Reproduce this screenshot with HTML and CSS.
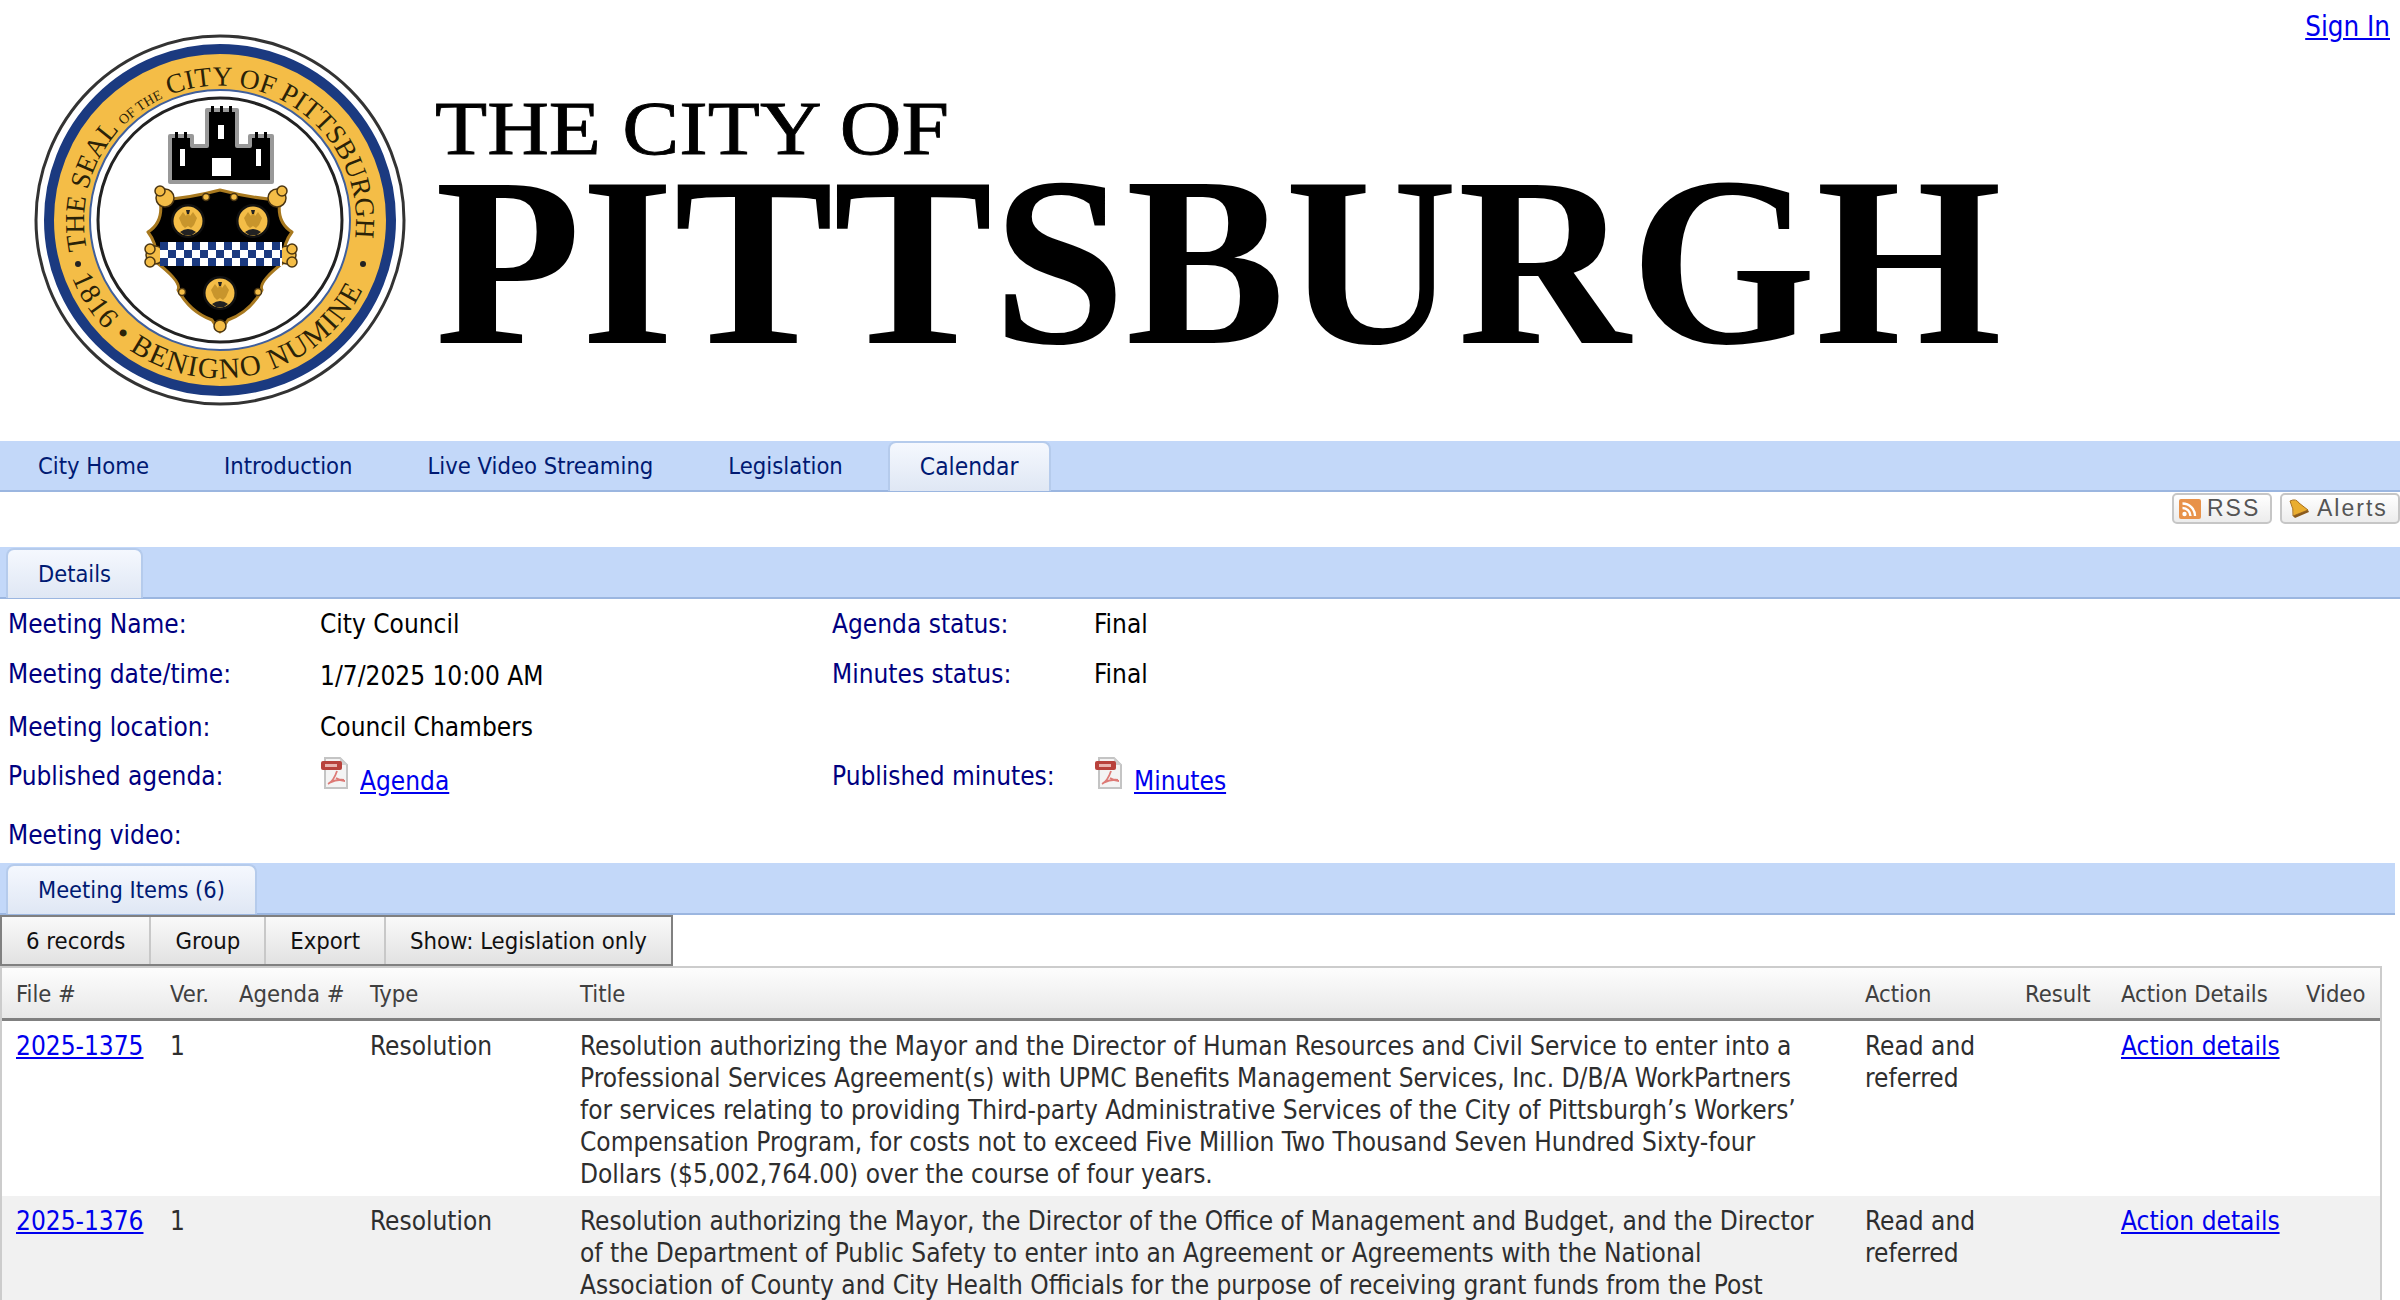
FILE: index.html
```html
<!DOCTYPE html>
<html lang="en">
<head>
<meta charset="utf-8">
<title>City of Pittsburgh - Meeting Details</title>
<link rel="stylesheet" href="styles.css">
</head>
<body>
<header class="masthead">
  <svg class="logo" viewBox="0 0 2010 441" width="2010" height="441" role="img" aria-label="The City of Pittsburgh">
    <defs>
      <path id="sealTop" d="M85 256 A140 140 0 1 1 355 256"/>
      <path id="sealBottom" d="M70 272 A159 159 0 0 0 370 272"/>
      <path id="sealTopBase" d="M87 250 A136 136 0 1 1 353 250"/>
      <pattern id="chequer" x="160" y="242" width="16" height="16" patternUnits="userSpaceOnUse">
        <rect width="16" height="16" fill="#fff"/>
        <rect x="0" y="0" width="8" height="8" fill="#1b3a80"/>
        <rect x="8" y="8" width="8" height="8" fill="#1b3a80"/>
      </pattern>
      <g id="roundel">
        <circle r="17" fill="#111"/>
        <circle r="14.5" fill="#f4bd47"/>
        <path d="M-9 -3 L-5 -9 L-2 -5 L0 -10 L2 -5 L5 -9 L9 -3 L6 4 L3 7 L0 5 L-3 7 L-6 4 Z" fill="#c8952c"/>
        <path d="M-8 11 Q0 5 8 11 L4 14 H-4 Z" fill="#222"/>
        <path d="M-2 -11 H2 L1 -7 H-1 Z" fill="#222"/>
      </g>
    </defs>
    <circle cx="220" cy="220" r="184" fill="#fff" stroke="#333" stroke-width="3"/>
    <circle cx="220" cy="220" r="171" fill="#f4bd47" stroke="#1b3a80" stroke-width="10"/>
    <circle cx="220" cy="220" r="130" fill="#fff" stroke="#3f5f9c" stroke-width="2"/>
    <circle cx="220" cy="220" r="122" fill="#fff" stroke="#222" stroke-width="3"/>
    <text class="seal-text"><textPath href="#sealTopBase">THE SEAL <tspan class="seal-small">OF THE</tspan> CITY OF PITTSBURGH</textPath></text>
    <text class="seal-text seal-lower"><textPath href="#sealBottom" startOffset="6">1816 • BENIGNO NUMINE</textPath></text>
    <circle cx="78" cy="264" r="3" fill="#222"/>
    <circle cx="363" cy="264" r="3" fill="#222"/>
    <path d="M170 136 H192 V146 H207 V110 H237 V146 H250 V136 H272 V182 H170 Z" fill="#000" stroke="#999" stroke-width="4" stroke-linejoin="round"/>
    <path d="M175 132 h3 v6 h-3z M184 132 h3 v6 h-3z M211 106 h3 v6 h-3z M220 106 h3 v6 h-3z M229 106 h3 v6 h-3z M255 132 h3 v6 h-3z M264 132 h3 v6 h-3z" fill="#000"/>
    <path d="M212 176 V158 H231 V176 Z M218 125 h6 v14 h-6z M180 149 h5 v17 h-5z M256 149 h5 v17 h-5z" fill="#fff"/>
    <path d="M160 200 Q190 198 220 190 Q250 198 280 200 Q276 222 292 232 Q282 245 284 262 Q258 282 262 290 Q250 312 228 320 L220 332 L212 320 Q190 312 178 290 Q182 282 156 262 Q158 245 148 232 Q164 222 160 200 Z" fill="#000" stroke="#a8791f" stroke-width="3" stroke-linejoin="round"/>
    <g fill="#f4bd47" stroke="#4a3512" stroke-width="1.5">
      <circle cx="165" cy="198" r="9"/><circle cx="160" cy="191" r="5"/>
      <circle cx="277" cy="198" r="9"/><circle cx="282" cy="191" r="5"/>
      <circle cx="155" cy="255" r="9"/><circle cx="150" cy="249" r="5"/><circle cx="150" cy="262" r="5"/>
      <circle cx="287" cy="255" r="9"/><circle cx="292" cy="249" r="5"/><circle cx="292" cy="262" r="5"/>
      <circle cx="220" cy="326" r="6"/>
      <circle cx="206" cy="197" r="3.5"/><circle cx="234" cy="197" r="3.5"/>
      <circle cx="182" cy="292" r="3.5"/><circle cx="258" cy="292" r="3.5"/>
    </g>
    <rect x="160" y="242" width="122" height="24" fill="url(#chequer)"/>
    <use href="#roundel" x="188" y="221"/>
    <use href="#roundel" x="253" y="221"/>
    <use href="#roundel" x="220" y="293"/>
    <text class="logo-small" x="435" y="154" textLength="514" lengthAdjust="spacingAndGlyphs">THE CITY OF</text>
    <text class="logo-big" x="435" y="343" textLength="1567" lengthAdjust="spacingAndGlyphs">PITTSBURGH</text>
  </svg>
  <a class="link sign-in" href="#">Sign In</a>
</header>

<nav class="tabbar">
  <a class="tab" href="#">City Home</a>
  <a class="tab" href="#">Introduction</a>
  <a class="tab" href="#">Live Video Streaming</a>
  <a class="tab" href="#">Legislation</a>
  <a class="tab tab-active tab-current" href="#">Calendar</a>
</nav>

<div class="feeds">
  <a class="feed feed-rss" href="#">
    <svg class="feed-icon" viewBox="0 0 22 20" width="22" height="20"><rect width="22" height="20" rx="2" fill="#e8924a"/><circle cx="5.5" cy="15" r="2.2" fill="#fff"/><path d="M3.5 9 A8 8 0 0 1 11.5 17 M3.5 4.5 A12.5 12.5 0 0 1 16 17" fill="none" stroke="#fff" stroke-width="2.4"/></svg>
    <span>RSS</span>
  </a>
  <a class="feed feed-alerts" href="#">
    <svg class="feed-icon" viewBox="0 0 24 24" width="24" height="24"><path d="M3 4 Q9 1 12 6 L21 13 L6 19 Q7 12 3 4 Z" fill="#e9ad2f" stroke="#a8701c" stroke-width="1"/><path d="M6 19 L21 13 L22 15 L8 21 Z" fill="#8a5a1c"/></svg>
    <span>Alerts</span>
  </a>
</div>

<div class="tabbar tabbar-sub">
  <span class="tab tab-active tab-first">Details</span>
</div>

<section class="details">
  <div class="label">Meeting Name:</div><div class="value">City Council</div>
  <div class="label">Agenda status:</div><div class="value">Final</div>

  <div class="label">Meeting date/time:</div><div class="value value-low">1/7/2025 10:00 AM</div>
  <div class="label">Minutes status:</div><div class="value">Final</div>

  <div class="label">Meeting location:</div><div class="value">Council Chambers</div>
  <div class="label"></div><div class="value"></div>

  <div class="label">Published agenda:</div>
  <div class="value doc">
    <svg class="pdf" viewBox="0 0 30 34" width="30" height="34"><use href="#pdfIcon"/></svg>
    <a class="link" href="#">Agenda</a>
  </div>
  <div class="label">Published minutes:</div>
  <div class="value doc">
    <svg class="pdf" viewBox="0 0 30 34" width="30" height="34"><use href="#pdfIcon"/></svg>
    <a class="link" href="#">Minutes</a>
  </div>

  <div class="label">Meeting video:</div>
</section>

<svg class="defs-only" width="0" height="0" aria-hidden="true">
  <defs>
    <g id="pdfIcon">
      <path d="M5 1 H20 L27 8 V31 H5 Z" fill="#f4f4f4" stroke="#c4c4c4" stroke-width="2"/>
      <path d="M20 1 V8 H27 Z" fill="#d0d0d0"/>
      <rect x="1" y="4" width="21" height="9" rx="2" fill="#b8423c"/>
      <rect x="5" y="7" width="12" height="3" fill="#e9b5b0"/>
      <path d="M17 14 C15 20 12 25 8 27 M16 21 C19 23 22 24 25 24 M9 26 C13 24 18 22 24 23" fill="none" stroke="#dd7a76" stroke-width="1.8"/>
    </g>
  </defs>
</svg>

<div class="tabbar tabbar-items">
  <span class="tab tab-active tab-first">Meeting Items (6)</span>
</div>

<div class="toolbar">
  <span class="tool">6 records</span>
  <span class="tool">Group</span>
  <span class="tool">Export</span>
  <span class="tool">Show: Legislation only</span>
</div>

<table class="grid">
  <colgroup>
    <col class="c-file"><col class="c-ver"><col class="c-agenda"><col class="c-type"><col class="c-title"><col class="c-action"><col class="c-result"><col class="c-details"><col class="c-video">
  </colgroup>
  <thead>
    <tr><th>File #</th><th>Ver.</th><th>Agenda #</th><th>Type</th><th>Title</th><th>Action</th><th>Result</th><th>Action Details</th><th>Video</th></tr>
  </thead>
  <tbody>
    <tr>
      <td><a class="link" href="#">2025-1375</a></td><td>1</td><td></td><td>Resolution</td>
      <td>Resolution authorizing the Mayor and the Director of Human Resources and Civil Service to enter into a Professional Services Agreement(s) with UPMC Benefits Management Services, Inc. D/B/A WorkPartners for services relating to providing Third-party Administrative Services of the City of Pittsburgh’s Workers’ Compensation Program, for costs not to exceed Five Million Two Thousand Seven Hundred Sixty-four Dollars ($5,002,764.00) over the course of four years.</td>
      <td>Read and referred</td><td></td><td><a class="link" href="#">Action details</a></td><td></td>
    </tr>
    <tr class="alt">
      <td><a class="link" href="#">2025-1376</a></td><td>1</td><td></td><td>Resolution</td>
      <td>Resolution authorizing the Mayor, the Director of the Office of Management and Budget, and the Director of the Department of Public Safety to enter into an Agreement or Agreements with the National Association of County and City Health Officials for the purpose of receiving grant funds from the Post</td>
      <td>Read and referred</td><td></td><td><a class="link" href="#">Action details</a></td><td></td>
    </tr>
  </tbody>
</table>
</body>
</html>
```
FILE: styles.css
```css
html, body { margin: 0; padding: 0; background: #fff; overflow: hidden; height: 1300px; }
body {
  font-family: "DejaVu Sans Condensed", "DejaVu Sans", sans-serif;
  font-stretch: condensed;
  font-size: 26px;
  color: #000;
}
.defs-only { position: absolute; }
.masthead { display: flex; justify-content: space-between; align-items: flex-start; height: 441px; }
.logo { display: block; flex: none; }
.seal-text { font-family: "Liberation Serif", serif; font-size: 27.5px; fill: #2a2208; }
.seal-lower { font-size: 29px; letter-spacing: 1.5px; }
.seal-small { font-size: 14px; }
.logo-small { font-family: "Liberation Serif", serif; font-size: 77px; fill: #000; stroke: #000; stroke-width: 0.8px; }
.logo-big { font-family: "Liberation Serif", serif; font-weight: 700; font-size: 242px; fill: #000; }
.link { color: #0000ee; text-decoration: underline; }
.sign-in { margin: 10px 10px 0 0; font-size: 27.5px; }

.tabbar {
  display: flex;
  align-items: flex-end;
  box-sizing: border-box;
  height: 51px;
  background: #c3d8f9;
  border-bottom: 2px solid #9bb6e0;
  padding-left: 8px;
}
.tabbar-sub { height: 52px; padding-left: 6px; }
.tabbar-items { width: 2395px; height: 52px; padding-left: 6px; }
.tab {
  box-sizing: border-box;
  height: 49px;
  display: flex;
  align-items: center;
  padding: 0 30px;
  margin-right: 15px;
  font-size: 23.6px;
  color: #001a73;
  text-decoration: none;
  white-space: nowrap;
}
.tab-active {
  height: 50px;
  margin-bottom: -1px;
  padding: 0 30px 2px;
  background: linear-gradient(#f5f8fe, #dfe7f4);
  border: 2px solid #b5cbec;
  border-bottom: 0;
  border-radius: 8px 8px 0 0;
}
.tab-current { font-size: 24.4px; }
.tab-first { margin: 0 0 -1px 0; height: 50px; padding: 0 30px; font-size: 23.4px; }

.feeds { display: flex; justify-content: flex-end; gap: 8px; height: 55px; padding-top: 1px; box-sizing: border-box; }
.feed {
  box-sizing: border-box;
  height: 31px;
  display: flex;
  align-items: center;
  gap: 6px;
  padding: 0 5px;
  border: 2px solid #c6c6c6;
  border-radius: 5px;
  background: linear-gradient(#fff, #ececec);
  font-family: "Liberation Sans", sans-serif;
  font-size: 23px;
  letter-spacing: 2px;
  color: #555;
  text-decoration: none;
}
.feed-rss { width: 100px; }
.feed-alerts { width: 120px; }

.details {
  display: grid;
  grid-template-columns: 312px 512px 262px 1fr;
  grid-template-rows: 50px 53px 49px 59px 53px;
  padding-left: 8px;
  font-size: 26px;
}
.label { color: #000080; padding-top: 10px; }
.value { padding-top: 10px; }
.value-low { padding-top: 12px; }
.doc { display: flex; align-items: flex-start; gap: 10px; padding-top: 6px; }
.doc .link { padding-top: 9px; }
.pdf { flex: none; }

.toolbar {
  display: inline-flex;
  vertical-align: top;
  box-sizing: border-box;
  height: 51px;
  border: 2px solid #808080;
  background: linear-gradient(#f9f9f9, #e2e2e2);
  font-size: 23.7px;
  color: #111;
}
.tool { display: flex; align-items: center; padding: 0 24px; border-left: 2px solid #c8c8c8; white-space: nowrap; }
.tool:first-child { border-left: 0; }

.grid {
  display: table;
  table-layout: fixed;
  border-collapse: separate;
  border-spacing: 0;
  width: 2382px;
  border: 2px solid #ccc;
  border-bottom: 0;
  color: #2e2e2e;
}
.c-file { width: 154px; } .c-ver { width: 69px; } .c-agenda { width: 131px; } .c-type { width: 210px; }
.c-title { width: 1285px; } .c-action { width: 160px; } .c-result { width: 96px; } .c-details { width: 185px; } .c-video { width: 88px; }
.grid th {
  height: 53px;
  padding: 2px 0 0 14px;
  box-sizing: border-box;
  text-align: left;
  font-weight: 400;
  font-size: 23.6px;
  color: #404040;
  background: linear-gradient(#fdfdfd, #e8e8e8);
  border-bottom: 3px solid #808080;
  white-space: nowrap;
}
.grid td {
  padding: 9px 30px 6px 14px;
  vertical-align: top;
  line-height: 32px;
  font-size: 26px;
}
.grid .alt td { background: #f1f1f1; }
.grid td a { white-space: nowrap; }
```
